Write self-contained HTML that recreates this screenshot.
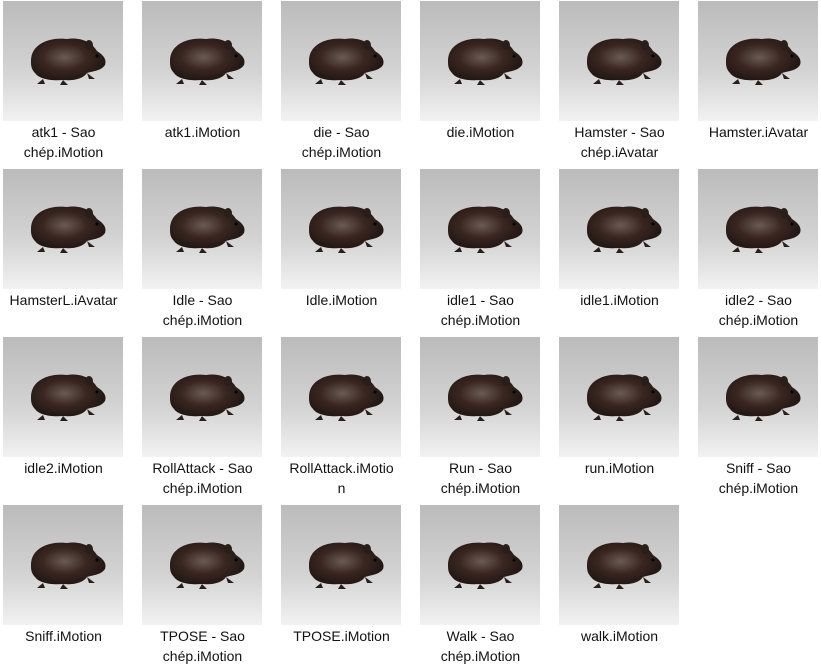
<!DOCTYPE html><html><head><style>
body{margin:0;width:821px;height:644px;overflow:hidden;background:#fff;font-family:"Liberation Sans",sans-serif;}
.i{position:absolute;width:139px;}
.t{position:absolute;left:3px;top:0;width:120px;height:120px;background:linear-gradient(#bbbbbb,#d4d4d4 60%,#f2f2f2);}
.t svg{position:absolute;left:0;top:0}
.l{position:absolute;left:-6px;width:139px;top:121px;text-align:center;font-size:14px;line-height:20px;color:#111;}
</style></head><body>
<svg width="0" height="0" style="position:absolute"><defs>
<radialGradient id="g" cx="0.45" cy="0.45" r="0.6"><stop offset="0" stop-color="#6a5a55"/><stop offset="0.5" stop-color="#3a2620"/><stop offset="1" stop-color="#1d1512"/></radialGradient>
<g id="h"><path d="M28 60 C28 42 48 36 64 38 C76 36 88 40 94 50 C100 54 104 58 102 64 C98 70 90 70 84 72 C80 78 70 80 60 79 C48 80 36 78 32 72 C28 68 28 64 28 60Z" fill="url(#g)"/>
<ellipse cx="86" cy="44" rx="4" ry="5" fill="#2a1e1a"/><circle cx="94" cy="55" r="1.5" fill="#000"/>
<path d="M40 78 l-6 5 h8z M60 79 l-3 5 h8z M84 72 l2 6 h6z" fill="#2a1e1a"/></g></defs></svg>
<div id="c"></div>
<script>
var n=[["atk1 - Sao<br>chép.iMotion","atk1.iMotion","die - Sao<br>chép.iMotion","die.iMotion","Hamster - Sao<br>chép.iAvatar","Hamster.iAvatar"],
["HamsterL.iAvatar","Idle - Sao<br>chép.iMotion","Idle.iMotion","idle1 - Sao<br>chép.iMotion","idle1.iMotion","idle2 - Sao<br>chép.iMotion"],
["idle2.iMotion","RollAttack - Sao<br>chép.iMotion","RollAttack.iMotio<br>n","Run - Sao<br>chép.iMotion","run.iMotion","Sniff - Sao<br>chép.iMotion"],
["Sniff.iMotion","TPOSE - Sao<br>chép.iMotion","TPOSE.iMotion","Walk - Sao<br>chép.iMotion","walk.iMotion"]];
var h="";for(var r=0;r<4;r++)for(var c=0;c<n[r].length;c++){
h+='<div class="i" style="left:'+(c*139)+'px;top:'+(1+r*168)+'px"><div class="t"><svg width="120" height="120"><use href="#h"/></svg></div><div class="l">'+n[r][c]+'</div></div>';}
document.getElementById("c").innerHTML=h;
</script>
</body></html>
